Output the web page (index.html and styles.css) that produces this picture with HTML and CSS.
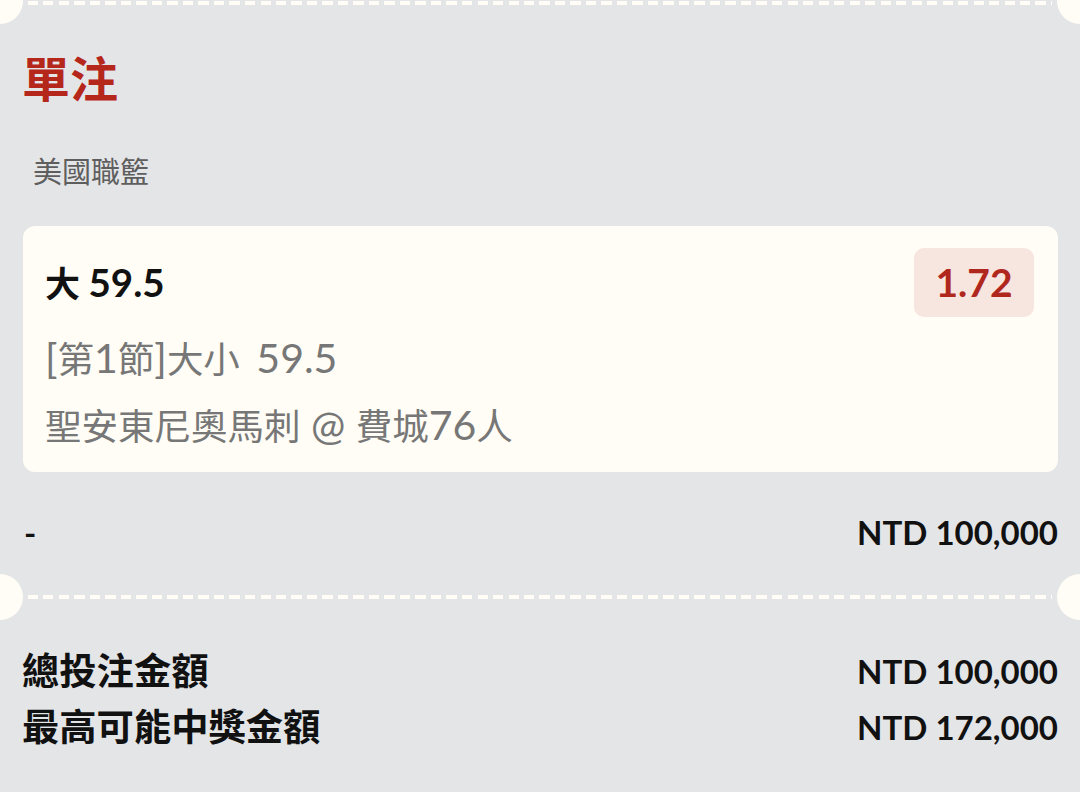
FILE: index.html
```html
<!DOCTYPE html>
<html lang="zh-Hant">
<head>
<meta charset="utf-8">
<title>單注</title>
<link rel="stylesheet" href="styles.css">
</head>
<body>
<div class="page">
  <div class="perf perf-top"></div>
  <div class="content">
    <h1 class="title">單注</h1>
    <div class="league">美國職籃</div>
    <div class="card">
      <div class="card-head">
        <div class="pick">大 <span class="lat">59.5</span></div>
        <div class="odds">1.72</div>
      </div>
      <div class="meta"><span class="lat">[</span>第<span class="lat">1</span>節<span class="lat">]</span>大小<span class="lat gap"> 59.5</span></div>
      <div class="meta meta-last">聖安東尼奧馬刺<span class="lat"> @ </span>費城<span class="lat">76</span>人</div>
    </div>
    <div class="row stake">
      <span>-</span>
      <span>NTD 100,000</span>
    </div>
  </div>
  <div class="perf perf-mid"></div>
  <div class="content summary">
    <div class="row sum-row">
      <span class="sum-label">總投注金額</span>
      <span>NTD 100,000</span>
    </div>
    <div class="row sum-row">
      <span class="sum-label">最高可能中獎金額</span>
      <span>NTD 172,000</span>
    </div>
  </div>
</div>
</body>
</html>
```

FILE: styles.css
```css
html, body {
  margin: 0;
  padding: 0;
}
body {
  background: #e4e5e7;
  font-family: Lato, "Noto Sans CJK TC", sans-serif;
  color: #111111;
  width: 1080px;
  height: 792px;
  overflow: hidden;
}
.page {
  width: 1080px;
}
.perf {
  position: relative;
  height: 4px;
  margin: 0 28px;
  background: repeating-linear-gradient(to right, #fffdf6 0 10px, transparent 10px 15.5px);
}
.perf::before,
.perf::after {
  content: "";
  position: absolute;
  width: 46px;
  height: 46px;
  border-radius: 50%;
  background: #fffdf6;
  top: -21px;
}
.perf::before { left: -51px; }
.perf::after { right: -51px; }
.perf-top {
  margin-top: 1px;
}
.perf-top::before,
.perf-top::after {
  top: -23px;
}
.content {
  padding: 0 22px 0 22px;
}
.title {
  margin: 44px 0 0 0;
  font-size: 48px;
  line-height: 60px;
  font-weight: 700;
  color: #b5261b;
}
.league {
  margin-top: 43px;
  padding-left: 11px;
  font-size: 29px;
  line-height: 40px;
  color: #5e5e5e;
}
.card {
  margin-top: 34px;
  margin-left: 1px;
  background: #fffdf5;
  border-radius: 12px;
  padding: 22px 24px 21px 22px;
}
.card-head {
  display: flex;
  justify-content: space-between;
  align-items: center;
}
.pick {
  font-size: 35px;
  font-weight: 700;
  line-height: 48px;
  color: #111111;
}
.pick .lat {
  font-size: 38.5px;
}
.odds {
  background: #f7e5e0;
  color: #b0271e;
  border-radius: 10px;
  font-size: 39px;
  font-weight: 700;
  line-height: 69px;
  padding: 0 21.5px;
}
.meta {
  margin-top: 16px;
  font-size: 36.5px;
  line-height: 50px;
  color: #777777;
}
.meta .lat {
  font-size: 41px;
}
.meta .gap {
  padding-left: 6px;
}
.row {
  display: flex;
  justify-content: space-between;
  align-items: center;
}
.stake {
  margin-top: 40px;
  padding-left: 2px;
  font-size: 33px;
  font-weight: 700;
  line-height: 40px;
  margin-bottom: 43px;
}
.summary {
  margin-top: 44px;
}
.sum-row {
  font-size: 33px;
  font-weight: 700;
  line-height: 56px;
}
.sum-label {
  font-size: 37.3px;
}
```
